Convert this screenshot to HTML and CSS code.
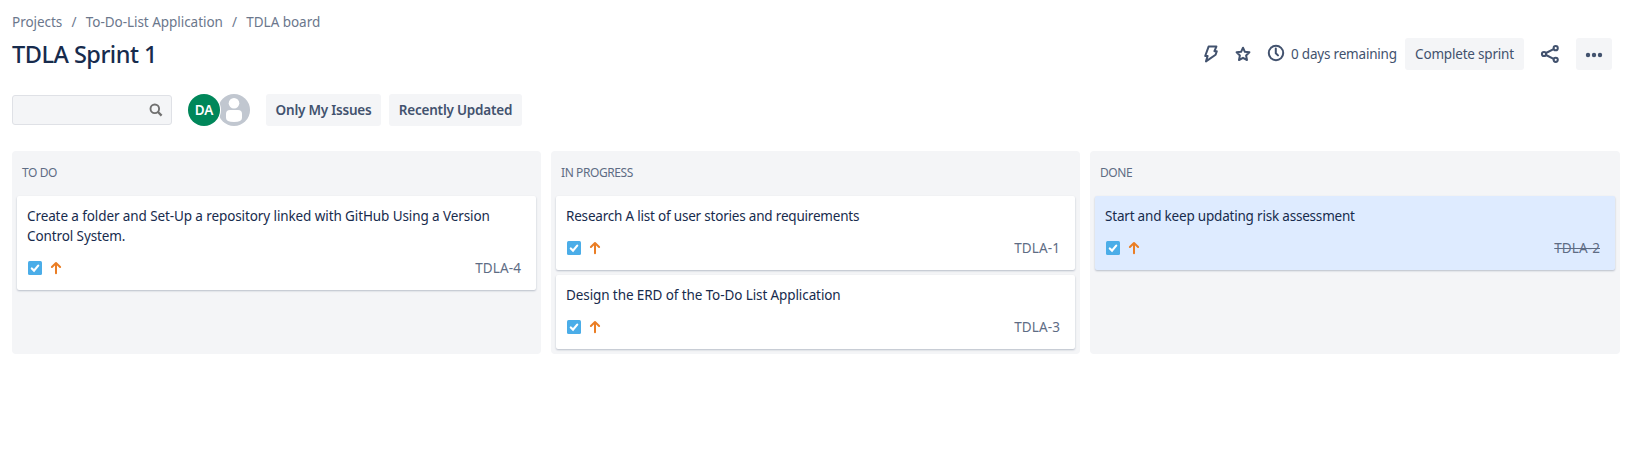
FILE: index.html
```html
<!DOCTYPE html>
<html lang="en">
<head>
<meta charset="utf-8">
<title>TDLA Sprint 1</title>
<link rel="stylesheet" href="styles.css">
</head>
<body>
<svg class="defs" aria-hidden="true">
  <symbol id="task" viewBox="0 0 14 14"><rect width="14" height="14" rx="1.5" fill="#4bade8"/><path d="M3.8 7.5 6 9.6 10.2 4.6" fill="none" stroke="#fff" stroke-width="2.2" stroke-linecap="round"/></symbol>
  <symbol id="prio" viewBox="0 0 12 14"><path d="M6 12.2V2.2M1.9 6 6 2 10.1 6" fill="none" stroke="#ea7d24" stroke-width="2" stroke-linecap="round" stroke-linejoin="round"/></symbol>
</svg>
<nav class="crumbs"><a>Projects</a><i>/</i><a>To-Do-List Application</a><i>/</i><a>TDLA board</a></nav>
<header class="head">
  <h1>TDLA Sprint 1</h1>
  <div class="actions">
    <svg class="bolt" width="16" height="18" viewBox="0 0 16 18"><path d="M5.6 1.6H13.4L11.4 6.2H13.8L12.6 9.8 3 16.4 4.6 11H2.2Z"/></svg>
    <svg class="star" width="16" height="16" viewBox="0 0 16 16"><path d="M8 1.7 9.9 5.8 14.4 6.3 11.1 9.4 12 14 8 11.8 4 14 4.9 9.4 1.6 6.3 6.1 5.8Z"/></svg>
    <svg class="clock" width="18" height="18" viewBox="0 0 18 18"><circle cx="9" cy="9" r="7.2"/><path d="M8.8 4.4V9.2L11 11.4"/></svg>
    <span class="remaining">0 days remaining</span>
    <button class="btn complete">Complete sprint</button>
    <svg class="share" width="20" height="20" viewBox="0 0 20 20"><circle cx="4" cy="10" r="2.1"/><circle cx="15.7" cy="4.2" r="2.1"/><circle cx="15.7" cy="15.8" r="2.1"/><path d="M6 9 13.6 5.2M6 11 13.6 14.8"/></svg>
    <button class="btn more"><svg width="18" height="6" viewBox="0 0 18 6"><circle cx="3" cy="3" r="2.2"/><circle cx="9" cy="3" r="2.2"/><circle cx="15" cy="3" r="2.2"/></svg></button>
  </div>
</header>
<div class="tools">
  <div class="search"><svg width="14" height="14" viewBox="0 0 14 14"><circle cx="5.8" cy="5.8" r="4.3" fill="none" stroke="#707070" stroke-width="1.9"/><path d="m9 9 3.6 3.6" stroke="#707070" stroke-width="2.3"/></svg></div>
  <div class="avatars">
    <span class="da">DA</span>
    <svg class="nobody" width="32" height="32" viewBox="0 0 32 32"><circle cx="16" cy="16" r="16" fill="#c1c7d0"/><circle cx="16" cy="9.3" r="5.3" fill="#fff"/><path d="M8 20a4 4 0 0 1 4-4h8a4 4 0 0 1 4 4v4q0 4-8 4t-8-4Z" fill="#fff"/></svg>
  </div>
  <button class="btn filter mine">Only My Issues</button>
  <button class="btn filter recent">Recently Updated</button>
</div>
<main class="board">
  <section class="col"><h2>TO DO</h2>
    <article class="card"><p>Create a folder and Set-Up a repository linked with GitHub Using a Version<br>Control System.</p><footer><svg class="task"><use href="#task"/></svg><svg class="prio"><use href="#prio"/></svg><span>TDLA-4</span></footer></article>
  </section>
  <section class="col"><h2>IN PROGRESS</h2>
    <article class="card"><p class="research">Research A list of user stories and requirements</p><footer><svg class="task"><use href="#task"/></svg><svg class="prio"><use href="#prio"/></svg><span>TDLA-1</span></footer></article>
    <article class="card"><p>Design the ERD of the To-Do List Application</p><footer><svg class="task"><use href="#task"/></svg><svg class="prio"><use href="#prio"/></svg><span>TDLA-3</span></footer></article>
  </section>
  <section class="col"><h2>DONE</h2>
    <article class="card selected"><p class="risk">Start and keep updating risk assessment</p><footer><svg class="task"><use href="#task"/></svg><svg class="prio"><use href="#prio"/></svg><span class="done">TDLA-2</span></footer></article>
  </section>
</main>
</body>
</html>
```
FILE: styles.css
```css
* { box-sizing: border-box; }
body { margin: 0; padding: 12px 12px 0; background: #fff; color: #172b4d; font: 13.5px/20px "Noto Sans", "Open Sans", sans-serif; letter-spacing: -0.12px; }
h1, h2, p { margin: 0; font-weight: 400; }
svg { display: block; flex: none; }
.defs { position: absolute; width: 0; height: 0; }
.crumbs { display: flex; height: 20px; color: #6b778c; letter-spacing: -0.04px; }
.crumbs i { width: 23.5px; text-align: center; font-style: normal; }
.head { display: flex; justify-content: space-between; align-items: center; height: 32px; margin-top: 6px; }
h1 { font-size: 23.5px; line-height: 28px; font-weight: 500; letter-spacing: -0.5px; }
.actions { display: flex; align-items: center; padding-right: 8px; color: #42526e; }
.actions > svg { fill: none; stroke: #42526e; stroke-width: 2; stroke-linejoin: round; stroke-linecap: round; }
.star { margin-left: 16px; }
.clock { margin: 0 6px 2px 16px; }
.remaining { width: 107px; margin-right: 7px; letter-spacing: -0.2px; white-space: nowrap; }
.btn { display: flex; align-items: center; justify-content: center; height: 32px; padding: 0; border: 0; border-radius: 3px; background: #f4f5f7; color: #42526e; font: inherit; letter-spacing: inherit; white-space: nowrap; }
.complete { width: 119px; letter-spacing: -0.2px; }
.share { margin: 0 16px; }
.more { width: 36px; }
.more svg { fill: #42526e; margin-top: 2px; }
.tools { display: flex; align-items: center; height: 32px; margin-top: 24px; }
.search { display: flex; align-items: center; justify-content: flex-end; width: 160px; height: 30px; padding-right: 8px; border: 1px solid #dfe1e6; border-radius: 3px; background: #f4f5f7; }
.avatars { display: flex; margin: 0 16px; }
.da { z-index: 1; width: 32px; height: 32px; border-radius: 50%; background: #00875a; box-shadow: 0 0 0 1px #fff; color: #fff; font-weight: 600; line-height: 32px; text-align: center; }
.nobody { margin-left: -2px; }
.filter { font-weight: 600; letter-spacing: -0.22px; }
.mine { width: 115px; margin-right: 8px; }
.recent { width: 133px; }
.board { display: grid; grid-template-columns: 529px 529px 530px; gap: 10px; height: 203px; margin-top: 25px; }
.col { padding: 0 5px; border-radius: 4px; background: #f4f5f7; }
h2 { height: 45px; padding: 0 5px; color: #5e6c84; font-size: 12px; line-height: 43px; letter-spacing: -0.42px; }
.card { margin-bottom: 5px; padding: 10px 10px 12px; border-radius: 2px; background: #fff; box-shadow: 0 1px 2px rgba(9, 30, 66, .25); }
.card p { white-space: nowrap; letter-spacing: -0.1px; }
.card .research, .card .risk { letter-spacing: -0.2px; }
.selected { background: #deebff; }
.card footer { display: flex; align-items: center; height: 20px; margin-top: 12px; padding: 0 5px 0 1px; color: #5e6c84; }
.task { width: 14px; height: 14px; }
.prio { width: 12px; height: 14px; margin-left: 8px; }
.card footer span { margin-left: auto; letter-spacing: 0.1px; }
.card footer .done { text-decoration: line-through; }
```
